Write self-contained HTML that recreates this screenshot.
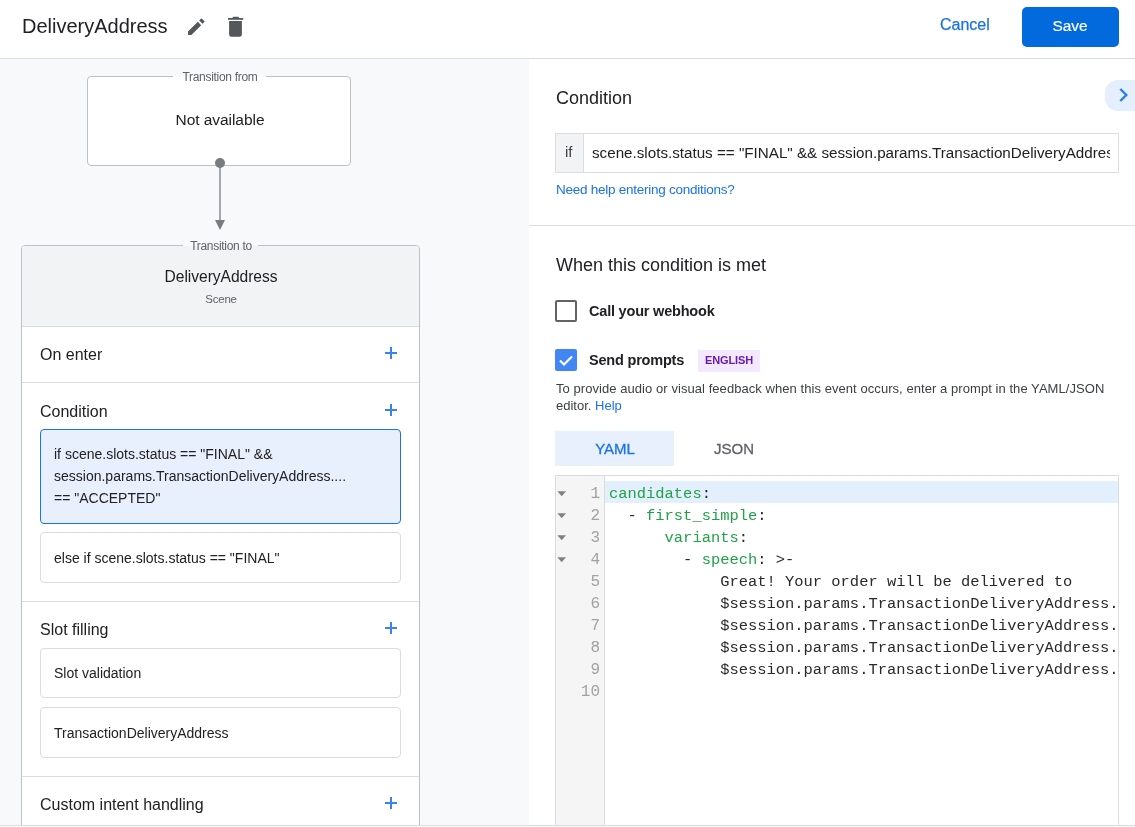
<!DOCTYPE html>
<html><head><meta charset="utf-8"><style>
html,body{margin:0;padding:0;}
body{width:1135px;height:827px;overflow:hidden;position:relative;background:#fff;font-family:'Liberation Sans', sans-serif;}
.r{position:absolute;}
.t{position:absolute;white-space:nowrap;will-change:transform;}
.k{color:#22a247;}
</style></head><body>
<div class="r" style="left:0px;top:0px;width:1135px;height:58px;background:#fff;"></div>
<div class="r" style="left:0px;top:58px;width:1135px;height:1px;background:#dadce0;"></div>
<div class="t" style="left:22px;top:13.57px;font-size:20px;line-height:25px;color:#202124;font-weight:400;font-family:'Liberation Sans', sans-serif;">DeliveryAddress</div>
<svg class="r" style="left:186px;top:17px" width="20" height="20" viewBox="0 0 20 20"><path fill="#54585d" d="M2 14.6 L2 18 L5.4 18 L15.2 8.2 L11.8 4.8 Z"/><path fill="#54585d" d="M13.2 3.4 L14.9 1.7 Q15.4 1.2 15.9 1.7 L18.3 4.1 Q18.8 4.6 18.3 5.1 L16.6 6.8 Z"/></svg>
<svg class="r" style="left:226px;top:15px" width="20" height="24" viewBox="0 0 20 24"><path fill="#54585d" d="M2 3h15.2v1.8H2z"/><path fill="#54585d" d="M6.4 3.2Q6.6 1.8 7.6 1.8H12Q13 1.8 13.1 3.2z"/><path fill="#54585d" d="M3.1 6.1h12.8v13.1a2.5 2.5 0 0 1-2.5 2.5H5.6a2.5 2.5 0 0 1-2.5-2.5z"/></svg>
<div class="t" style="left:940px;top:15.45px;font-size:16px;line-height:20px;color:#1a73e8;font-weight:500;font-family:'Liberation Sans', sans-serif;-webkit-text-stroke:0.25px #1a73e8;">Cancel</div>
<div class="r" style="left:1022px;top:7px;width:97px;height:40px;background:#036ade;border-radius:5px;"></div>
<div class="t" style="left:770.2px;width:600px;text-align:center;top:16.36px;font-size:15.4px;line-height:19px;color:#fff;font-weight:500;font-family:'Liberation Sans', sans-serif;-webkit-text-stroke:0.2px #fff;">Save</div>
<div class="r" style="left:0px;top:59px;width:529px;height:766px;background:#f8f9fa;"></div>
<div class="r" style="left:0px;top:825px;width:1135px;height:1px;background:#dadce0;"></div>
<div class="r" style="left:0px;top:826px;width:1135px;height:1px;background:#f8f9fa;"></div>
<div class="r" style="left:87px;top:76px;width:264px;height:90px;background:#fff;border:1px solid #bdc1c5;border-radius:4px;box-sizing:border-box;"></div>
<div class="r" style="left:173px;top:76px;width:93px;height:1px;background:#f8f9fa;"></div>
<div class="t" style="left:-80.5px;width:600px;text-align:center;top:69.84px;font-size:12px;line-height:15px;color:#5f6368;font-weight:400;font-family:'Liberation Sans', sans-serif;letter-spacing:-0.3px;">Transition from</div>
<div class="t" style="left:-80.5px;width:600px;text-align:center;top:109.73px;font-size:15.5px;line-height:19px;color:#202124;font-weight:400;font-family:'Liberation Sans', sans-serif;letter-spacing:-0.05px;">Not available</div>
<div class="r" style="left:219px;top:163px;width:2px;height:58px;background:#a2a7ab;"></div>
<div class="r" style="left:215px;top:158px;width:10px;height:10px;background:#777c81;border-radius:50%;"></div>
<svg class="r" style="left:214px;top:219px" width="12" height="12" viewBox="0 0 12 12"><path fill="#777c81" d="M1 1h10l-5 10z"/></svg>
<div class="r" style="left:21px;top:245px;width:399px;height:600px;background:#fff;border:1px solid #bdc1c5;border-radius:4px;box-sizing:border-box;"></div>
<div class="r" style="left:22px;top:246px;width:397px;height:80px;background:#f1f3f4;border-radius:3px 3px 0 0;"></div>
<div class="r" style="left:22px;top:326px;width:397px;height:1px;background:#dadce0;"></div>
<div class="r" style="left:183px;top:245px;width:75px;height:1px;background:#f8f9fa;"></div>
<div class="t" style="left:-79.5px;width:600px;text-align:center;top:238.74px;font-size:12px;line-height:15px;color:#5f6368;font-weight:400;font-family:'Liberation Sans', sans-serif;letter-spacing:-0.3px;">Transition to</div>
<div class="t" style="left:-79.5px;width:600px;text-align:center;top:267.09px;font-size:15.6px;line-height:20px;color:#202124;font-weight:400;font-family:'Liberation Sans', sans-serif;letter-spacing:-0.05px;">DeliveryAddress</div>
<div class="t" style="left:-79.5px;width:600px;text-align:center;top:292.31px;font-size:11.5px;line-height:14px;color:#5f6368;font-weight:400;font-family:'Liberation Sans', sans-serif;letter-spacing:-0.2px;">Scene</div>
<div class="t" style="left:40px;top:345.05px;font-size:16px;line-height:20px;color:#202124;font-weight:400;font-family:'Liberation Sans', sans-serif;">On enter</div>
<div class="r" style="left:385px;top:352px;width:12px;height:2px;background:#3b82ee;"></div>
<div class="r" style="left:390px;top:347px;width:2px;height:12px;background:#3b82ee;"></div>
<div class="r" style="left:22px;top:382px;width:397px;height:1px;background:#dadce0;"></div>
<div class="t" style="left:40px;top:402.05px;font-size:16px;line-height:20px;color:#202124;font-weight:400;font-family:'Liberation Sans', sans-serif;">Condition</div>
<div class="r" style="left:385px;top:409px;width:12px;height:2px;background:#3b82ee;"></div>
<div class="r" style="left:390px;top:404px;width:2px;height:12px;background:#3b82ee;"></div>
<div class="r" style="left:40px;top:429px;width:361px;height:95px;background:#e8f0fe;border:1px solid #1a73e8;border-radius:4px;box-sizing:border-box;"></div>
<div class="t" style="left:54px;top:444.75px;font-size:14px;line-height:18px;color:#202124;font-weight:400;font-family:'Liberation Sans', sans-serif;">if scene.slots.status == "FINAL" &amp;&amp;</div>
<div class="t" style="left:54px;top:466.85px;font-size:14px;line-height:18px;color:#202124;font-weight:400;font-family:'Liberation Sans', sans-serif;">session.params.TransactionDeliveryAddress....</div>
<div class="t" style="left:54px;top:488.75px;font-size:14px;line-height:18px;color:#202124;font-weight:400;font-family:'Liberation Sans', sans-serif;">== "ACCEPTED"</div>
<div class="r" style="left:40px;top:532px;width:361px;height:51px;background:#fff;border:1px solid #dadce0;border-radius:4px;box-sizing:border-box;"></div>
<div class="t" style="left:54px;top:548.85px;font-size:14px;line-height:18px;color:#202124;font-weight:400;font-family:'Liberation Sans', sans-serif;">else if scene.slots.status == "FINAL"</div>
<div class="r" style="left:22px;top:601px;width:397px;height:1px;background:#dadce0;"></div>
<div class="t" style="left:40px;top:619.65px;font-size:16px;line-height:20px;color:#202124;font-weight:400;font-family:'Liberation Sans', sans-serif;">Slot filling</div>
<div class="r" style="left:385px;top:627px;width:12px;height:2px;background:#3b82ee;"></div>
<div class="r" style="left:390px;top:622px;width:2px;height:12px;background:#3b82ee;"></div>
<div class="r" style="left:40px;top:648px;width:361px;height:50px;background:#fff;border:1px solid #dadce0;border-radius:4px;box-sizing:border-box;"></div>
<div class="t" style="left:54px;top:664.35px;font-size:14px;line-height:18px;color:#202124;font-weight:400;font-family:'Liberation Sans', sans-serif;">Slot validation</div>
<div class="r" style="left:40px;top:707px;width:361px;height:51px;background:#fff;border:1px solid #dadce0;border-radius:4px;box-sizing:border-box;"></div>
<div class="t" style="left:54px;top:724.15px;font-size:14px;line-height:18px;color:#202124;font-weight:400;font-family:'Liberation Sans', sans-serif;">TransactionDeliveryAddress</div>
<div class="r" style="left:22px;top:776px;width:397px;height:1px;background:#dadce0;"></div>
<div class="t" style="left:40px;top:794.85px;font-size:16px;line-height:20px;color:#202124;font-weight:400;font-family:'Liberation Sans', sans-serif;">Custom intent handling</div>
<div class="r" style="left:385px;top:802px;width:12px;height:2px;background:#3b82ee;"></div>
<div class="r" style="left:390px;top:797px;width:2px;height:12px;background:#3b82ee;"></div>
<div class="t" style="left:556px;top:87.16px;font-size:18px;line-height:22px;color:#202124;font-weight:400;font-family:'Liberation Sans', sans-serif;">Condition</div>
<div class="r" style="left:1105px;top:80px;width:60px;height:31px;background:#e5eefc;border-radius:13px;"></div>
<svg class="r" style="left:1116px;top:86px" width="14" height="18" viewBox="0 0 14 18"><path fill="none" stroke="#2a7de8" stroke-width="2.4" d="M4.3 3l6 6-6 6"/></svg>
<div class="r" style="left:555px;top:133px;width:564px;height:40px;background:#fff;border:1px solid #dadce0;box-sizing:border-box;"></div>
<div class="r" style="left:556px;top:134px;width:28px;height:38px;background:#f1f3f4;border-right:1px solid #dadce0;box-sizing:border-box;"></div>
<div class="t" style="left:565px;top:141.90px;font-size:15px;line-height:19px;color:#3c4043;font-weight:400;font-family:'Liberation Sans', sans-serif;">if</div>
<div class="r" style="left:592px;top:134px;width:518px;height:38px;overflow:hidden;">
<div class="t" style="left:0px;top:8.83px;font-size:15.2px;line-height:19px;color:#202124;font-weight:400;font-family:'Liberation Sans', sans-serif;">scene.slots.status == "FINAL" &amp;&amp; session.params.TransactionDeliveryAddress.status</div>
</div>
<div class="t" style="left:556px;top:181.02px;font-size:13.5px;line-height:17px;color:#1a73e8;font-weight:400;font-family:'Liberation Sans', sans-serif;letter-spacing:-0.25px;">Need help entering conditions?</div>
<div class="r" style="left:529px;top:225px;width:606px;height:1px;background:#dadce0;"></div>
<div class="t" style="left:556px;top:254.06px;font-size:18px;line-height:22px;color:#202124;font-weight:400;font-family:'Liberation Sans', sans-serif;">When this condition is met</div>
<div class="r" style="left:555px;top:300px;width:22px;height:22px;border:2px solid #5f6368;border-radius:2px;box-sizing:border-box;"></div>
<div class="t" style="left:589px;top:301.97px;font-size:14.5px;line-height:18px;color:#202124;font-weight:700;font-family:'Liberation Sans', sans-serif;letter-spacing:-0.2px;">Call your webhook</div>
<div class="r" style="left:555px;top:349px;width:22px;height:22px;background:#4285f4;border-radius:2px;"></div>
<svg class="r" style="left:555px;top:349px" width="22" height="22" viewBox="0 0 22 22"><path fill="none" stroke="#fff" stroke-width="2.2" d="M5 11.5l4 4 8-8"/></svg>
<div class="t" style="left:589px;top:350.97px;font-size:14.5px;line-height:18px;color:#202124;font-weight:700;font-family:'Liberation Sans', sans-serif;letter-spacing:-0.2px;">Send prompts</div>
<div class="r" style="left:698px;top:350px;width:62px;height:22px;background:#f3e8fd;"></div>
<div class="t" style="left:428.79999999999995px;width:600px;text-align:center;top:353.39px;font-size:11px;line-height:14px;color:#681da8;font-weight:700;font-family:'Liberation Sans', sans-serif;letter-spacing:-0.15px;">ENGLISH</div>
<div class="t" style="left:556px;top:380.89px;font-size:13px;line-height:16px;color:#3c4043;font-weight:400;font-family:'Liberation Sans', sans-serif;letter-spacing:0.06px;">To provide audio or visual feedback when this event occurs, enter a prompt in the YAML/JSON</div>
<div class="t" style="left:556px;top:397.89px;font-size:13px;line-height:16px;color:#3c4043;font-weight:400;font-family:'Liberation Sans', sans-serif;">editor. <span style="color:#1a73e8">Help</span></div>
<div class="r" style="left:555px;top:431px;width:119px;height:35px;background:#e8f0fe;"></div>
<div class="t" style="left:314.5px;width:600px;text-align:center;top:438.80px;font-size:15px;line-height:19px;color:#1a73e8;font-weight:500;font-family:'Liberation Sans', sans-serif;-webkit-text-stroke:0.3px #1a73e8;">YAML</div>
<div class="t" style="left:433.5px;width:600px;text-align:center;top:438.80px;font-size:15px;line-height:19px;color:#5f6368;font-weight:500;font-family:'Liberation Sans', sans-serif;-webkit-text-stroke:0.3px #5f6368;">JSON</div>
<div class="r" style="left:555px;top:475px;width:564px;height:360px;background:#fff;border:1px solid #dadce0;box-sizing:border-box;"></div>
<div class="r" style="left:556px;top:476px;width:48px;height:360px;background:#f5f5f5;"></div>
<div class="r" style="left:604px;top:476px;width:1px;height:360px;background:#dddddd;"></div>
<div class="r" style="left:605px;top:481px;width:513px;height:22px;background:#e3effc;"></div>
<div class="r" style="left:605px;top:476px;width:513px;height:349px;overflow:hidden;">
<div class="t" style="left:3.8px;top:8.89px;font-size:15.45px;line-height:19px;color:#2a2a2a;font-weight:400;font-family:'Liberation Mono', monospace;white-space:pre;"><span class="k">candidates</span>:</div>
<div class="t" style="left:3.8px;top:30.89px;font-size:15.45px;line-height:19px;color:#2a2a2a;font-weight:400;font-family:'Liberation Mono', monospace;white-space:pre;">  - <span class="k">first_simple</span>:</div>
<div class="t" style="left:3.8px;top:52.89px;font-size:15.45px;line-height:19px;color:#2a2a2a;font-weight:400;font-family:'Liberation Mono', monospace;white-space:pre;">      <span class="k">variants</span>:</div>
<div class="t" style="left:3.8px;top:74.89px;font-size:15.45px;line-height:19px;color:#2a2a2a;font-weight:400;font-family:'Liberation Mono', monospace;white-space:pre;">        - <span class="k">speech</span>: &gt;-</div>
<div class="t" style="left:3.8px;top:96.89px;font-size:15.45px;line-height:19px;color:#2a2a2a;font-weight:400;font-family:'Liberation Mono', monospace;white-space:pre;">            Great! Your order will be delivered to</div>
<div class="t" style="left:3.8px;top:118.89px;font-size:15.45px;line-height:19px;color:#2a2a2a;font-weight:400;font-family:'Liberation Mono', monospace;white-space:pre;">            $session.params.TransactionDeliveryAddress.location.formattedAddress</div>
<div class="t" style="left:3.8px;top:140.89px;font-size:15.45px;line-height:19px;color:#2a2a2a;font-weight:400;font-family:'Liberation Mono', monospace;white-space:pre;">            $session.params.TransactionDeliveryAddress.location.zipCode</div>
<div class="t" style="left:3.8px;top:162.89px;font-size:15.45px;line-height:19px;color:#2a2a2a;font-weight:400;font-family:'Liberation Mono', monospace;white-space:pre;">            $session.params.TransactionDeliveryAddress.location.city</div>
<div class="t" style="left:3.8px;top:184.89px;font-size:15.45px;line-height:19px;color:#2a2a2a;font-weight:400;font-family:'Liberation Mono', monospace;white-space:pre;">            $session.params.TransactionDeliveryAddress.location.country</div>
<div class="t" style="left:3.8px;top:206.89px;font-size:15.45px;line-height:19px;color:#2a2a2a;font-weight:400;font-family:'Liberation Mono', monospace;white-space:pre;"></div>
</div>
<div class="t" style="left:-0.5px;width:600px;text-align:right;top:484.24px;font-size:16px;line-height:20px;color:#a2a2a2;font-weight:400;font-family:'Liberation Mono', monospace;">1</div>
<svg class="r" style="left:557px;top:491.3px" width="10" height="6" viewBox="0 0 10 6"><path fill="#808080" d="M0.4 0.3h8.6l-4.3 5z"/></svg>
<div class="t" style="left:-0.5px;width:600px;text-align:right;top:506.24px;font-size:16px;line-height:20px;color:#a2a2a2;font-weight:400;font-family:'Liberation Mono', monospace;">2</div>
<svg class="r" style="left:557px;top:513.3px" width="10" height="6" viewBox="0 0 10 6"><path fill="#808080" d="M0.4 0.3h8.6l-4.3 5z"/></svg>
<div class="t" style="left:-0.5px;width:600px;text-align:right;top:528.24px;font-size:16px;line-height:20px;color:#a2a2a2;font-weight:400;font-family:'Liberation Mono', monospace;">3</div>
<svg class="r" style="left:557px;top:535.3px" width="10" height="6" viewBox="0 0 10 6"><path fill="#808080" d="M0.4 0.3h8.6l-4.3 5z"/></svg>
<div class="t" style="left:-0.5px;width:600px;text-align:right;top:550.24px;font-size:16px;line-height:20px;color:#a2a2a2;font-weight:400;font-family:'Liberation Mono', monospace;">4</div>
<svg class="r" style="left:557px;top:557.3px" width="10" height="6" viewBox="0 0 10 6"><path fill="#808080" d="M0.4 0.3h8.6l-4.3 5z"/></svg>
<div class="t" style="left:-0.5px;width:600px;text-align:right;top:572.24px;font-size:16px;line-height:20px;color:#a2a2a2;font-weight:400;font-family:'Liberation Mono', monospace;">5</div>
<div class="t" style="left:-0.5px;width:600px;text-align:right;top:594.24px;font-size:16px;line-height:20px;color:#a2a2a2;font-weight:400;font-family:'Liberation Mono', monospace;">6</div>
<div class="t" style="left:-0.5px;width:600px;text-align:right;top:616.24px;font-size:16px;line-height:20px;color:#a2a2a2;font-weight:400;font-family:'Liberation Mono', monospace;">7</div>
<div class="t" style="left:-0.5px;width:600px;text-align:right;top:638.24px;font-size:16px;line-height:20px;color:#a2a2a2;font-weight:400;font-family:'Liberation Mono', monospace;">8</div>
<div class="t" style="left:-0.5px;width:600px;text-align:right;top:660.24px;font-size:16px;line-height:20px;color:#a2a2a2;font-weight:400;font-family:'Liberation Mono', monospace;">9</div>
<div class="t" style="left:-0.5px;width:600px;text-align:right;top:682.24px;font-size:16px;line-height:20px;color:#a2a2a2;font-weight:400;font-family:'Liberation Mono', monospace;">10</div>
<div class="r" style="left:0px;top:825px;width:1135px;height:1px;background:#dadce0;"></div>
<div class="r" style="left:0px;top:826px;width:1135px;height:1px;background:#f8f9fa;"></div>
</body></html>
